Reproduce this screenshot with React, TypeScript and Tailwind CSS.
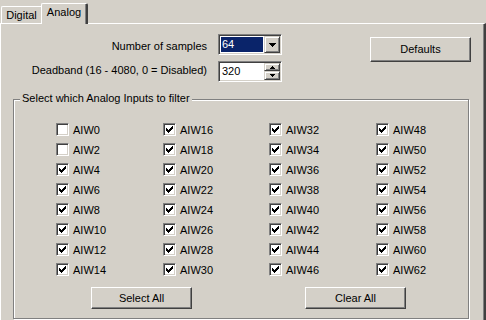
import React from 'react';

const raised =
  'border border-t-white border-l-white border-r-[#404040] border-b-[#404040] shadow-[inset_-1px_-1px_0_#808080] bg-[#d4d0c8]';
const sunken =
  'border border-t-[#808080] border-l-[#808080] border-r-white border-b-white shadow-[inset_1px_1px_0_#404040,inset_-1px_-1px_0_#d4d0c8] bg-white';
const scrollBtn =
  'border border-t-[#d4d0c8] border-l-[#d4d0c8] border-r-[#404040] border-b-[#404040] shadow-[inset_1px_1px_0_#fff,inset_-1px_-1px_0_#808080] bg-[#d4d0c8] flex items-center justify-center';

const CHECK = ['......X', '.....XX', 'X...XXX', 'XX.XXX.', 'XXXXX..', '.XXX...', '..X....'];

function CheckMark() {
  return (
    <svg width="7" height="7" viewBox="0 0 7 7" shapeRendering="crispEdges">
      {CHECK.map((row, y) =>
        row.split('').map((c, x) => (c === 'X' ? <rect key={`${x}-${y}`} x={x} y={y} width="1" height="1" fill="#000" /> : null))
      )}
    </svg>
  );
}

function CheckBox({ label, checked }: { label: string; checked: boolean }) {
  return (
    <div className="flex items-start h-[20px]">
      <span className={`${sunken} mt-[3px] w-[13px] h-[13px] shrink-0 flex items-center justify-center`}>
        {checked && <CheckMark />}
      </span>
      <span className="ml-[4px] leading-[20px]">{label}</span>
    </div>
  );
}

function Button({ children, className = '' }: { children: React.ReactNode; className?: string }) {
  return (
    <div className={`${raised} w-[101px] flex items-center justify-center ${className}`}>{children}</div>
  );
}

export default function App() {
  const columns = [0, 1, 2, 3];
  const rows = [0, 1, 2, 3, 4, 5, 6, 7];
  const colWidths = ['w-[107px]', 'w-[106px]', 'w-[107px]', 'w-[80px]'];

  return (
    <div className="w-[486px] h-[320px] overflow-hidden bg-[#d4d0c8] text-black text-[11px] font-['Liberation_Sans',Arial,sans-serif] flex flex-col">
      {/* tabs */}
      <div className="h-[23px] flex items-end pl-[1px] shrink-0">
        <div className="w-[40px] h-[17px] border-t border-l border-white rounded-tl-[2px] text-center pt-[2px] leading-[13px]">
          Digital
        </div>
        <div className="relative z-10 w-[47px] h-[21px] -mb-px border-t border-l border-white border-r-2 border-r-[#404040] shadow-[inset_-1px_0_0_#808080] rounded-t-[2px] bg-[#d4d0c8] text-center pt-[2px] leading-[13px]">
          Analog
        </div>
      </div>

      {/* page */}
      <div className="flex-1 border-t border-l border-white border-r-2 border-r-[#404040] shadow-[inset_-1px_0_0_#808080]">
        <div className="flex items-start pt-[10px]">
          <div className="flex flex-col gap-[6px]">
            <div className="flex h-[21px]">
              <span className="w-[206px] text-right pt-[6px] leading-[13px]">Number of samples</span>
              <div className={`${sunken} ml-[11px] w-[64px] h-[21px] flex p-[1px]`}>
                <div className="flex-1 my-[1px] ml-[1px] bg-[#0a246a] text-white leading-[15px] pl-[1px]">64</div>
                <div className={`${scrollBtn} w-[16px] ml-[1px]`}>
                  <svg width="7" height="4" viewBox="0 0 7 4" shapeRendering="crispEdges">
                    <polygon points="0,0 7,0 3.5,4" fill="#000" />
                  </svg>
                </div>
              </div>
            </div>
            <div className="flex h-[21px]">
              <span className="w-[206px] text-right pt-[3px] leading-[13px]">Deadband (16 - 4080, 0 = Disabled)</span>
              <div className={`${sunken} ml-[11px] w-[64px] h-[21px] flex p-[1px]`}>
                <div className="flex-1 pl-[2px] leading-[17px]">320</div>
                <div className="w-[16px] flex flex-col">
                  <div className={`${scrollBtn} h-[8px]`}>
                    <svg width="5" height="3" viewBox="0 0 5 3" shapeRendering="crispEdges">
                      <polygon points="2.5,0 5,3 0,3" fill="#000" />
                    </svg>
                  </div>
                  <div className={`${scrollBtn} h-[9px]`}>
                    <svg width="5" height="3" viewBox="0 0 5 3" shapeRendering="crispEdges">
                      <polygon points="0,0 5,0 2.5,3" fill="#000" />
                    </svg>
                  </div>
                </div>
              </div>
            </div>
          </div>
          <Button className="ml-[88px] mt-[3px] h-[25px]">Defaults</Button>
        </div>

        {/* group box */}
        <div className="relative ml-[12px] mt-[17px] w-[456px] h-[220px] border border-[#808080] shadow-[inset_1px_1px_0_#fff,1px_1px_0_#fff] pt-[20px] pl-[42px]">
          <span className="absolute left-[6px] top-[-8px] px-[2px] bg-[#d4d0c8] leading-[13px]">
            Select which Analog Inputs to filter
          </span>
          <div className="flex">
            {columns.map((c) => (
              <div key={c} className={`${colWidths[c]} flex flex-col`}>
                {rows.map((r) => {
                  const n = c * 16 + r * 2;
                  return <CheckBox key={n} label={`AIW${n}`} checked={n !== 0 && n !== 2} />;
                })}
              </div>
            ))}
          </div>
          <div className="flex mt-[7px]">
            <Button className="ml-[35px] h-[22px]">Select All</Button>
            <Button className="ml-[113px] h-[22px]">Clear All</Button>
          </div>
        </div>
      </div>
    </div>
  );
}
